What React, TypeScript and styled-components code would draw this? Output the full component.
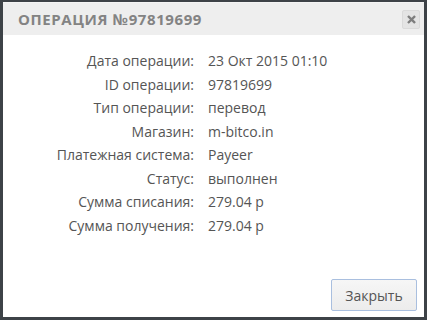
import styled, { createGlobalStyle } from 'styled-components';

const GlobalStyle = createGlobalStyle`
  html, body {
    margin: 0;
    padding: 0;
    background: #3d4247;
  }
  #root {
    padding: 2px 3px 3px 3px;
  }
`;

const rows: [string, string][] = [
  ['Дата операции:', '23 Окт 2015 01:10'],
  ['ID операции:', '97819699'],
  ['Тип операции:', 'перевод'],
  ['Магазин:', 'm-bitco.in'],
  ['Платежная система:', 'Payeer'],
  ['Статус:', 'выполнен'],
  ['Сумма списания:', '279.04 р'],
  ['Сумма получения:', '279.04 р'],
];

const App = () => {
  return (
    <>
      <GlobalStyle />
      <Dialog>
        <Header>
          <Title>Операция №97819699</Title>
          <CloseButton aria-label="close">
            <svg width="9" height="9" viewBox="0 0 10 10">
              <path d="M2 2 L8 8 M8 2 L2 8" stroke="#7e7e7e" strokeWidth="2.6" strokeLinecap="square" />
            </svg>
          </CloseButton>
        </Header>
        <Body>
          <Details>
            {rows.map(([label, value]) => (
              <Row key={label}>
                <Label>{label}</Label>
                <Value>{value}</Value>
              </Row>
            ))}
          </Details>
          <Footer>
            <Button>Закрыть</Button>
          </Footer>
        </Body>
      </Dialog>
    </>
  );
};

export default App;

const Dialog = styled.div`
  height: 315px;
  background: #fff;
  border-top: 1px solid #f4f4f4;
  display: flex;
  flex-direction: column;
  font-family: 'Open Sans', 'Noto Sans', sans-serif;
  box-sizing: border-box;
`;

const Header = styled.div`
  height: 32px;
  background: #eeeeee;
  display: flex;
  align-items: center;
  justify-content: space-between;
  padding: 0 4px 0 15px;
  box-sizing: border-box;
`;

const Title = styled.h1`
  margin: 0;
  font-size: 15px;
  font-weight: 700;
  letter-spacing: 0.6px;
  text-transform: uppercase;
  color: #838383;
`;

const CloseButton = styled.div`
  width: 18px;
  height: 19px;
  box-sizing: border-box;
  background: #e4e4e4;
  border: 1px solid #dadada;
  border-radius: 2px;
  display: flex;
  align-items: center;
  justify-content: center;
`;

const Body = styled.div`
  flex: 1;
  display: flex;
  flex-direction: column;
  padding: 14px 7px 6px 0;
`;

const Details = styled.div`
  display: flex;
  flex-direction: column;
  flex: 1;
`;

const Row = styled.div`
  display: grid;
  grid-template-columns: 191px 1fr;
  column-gap: 14px;
  height: 23.5px;
  align-items: center;
  font-size: 14px;
  color: #555;
`;

const Label = styled.span`
  text-align: right;
`;

const Value = styled.span``;

const Footer = styled.div`
  display: flex;
  justify-content: flex-end;
`;

const Button = styled.button`
  width: 86px;
  height: 32px;
  background: linear-gradient(#f6f6f6, #ececec);
  border: 1px solid #a9bfdf;
  border-radius: 2px;
  font-family: 'Open Sans', 'Noto Sans', sans-serif;
  font-size: 14px;
  color: #555;
  padding: 0;
`;
